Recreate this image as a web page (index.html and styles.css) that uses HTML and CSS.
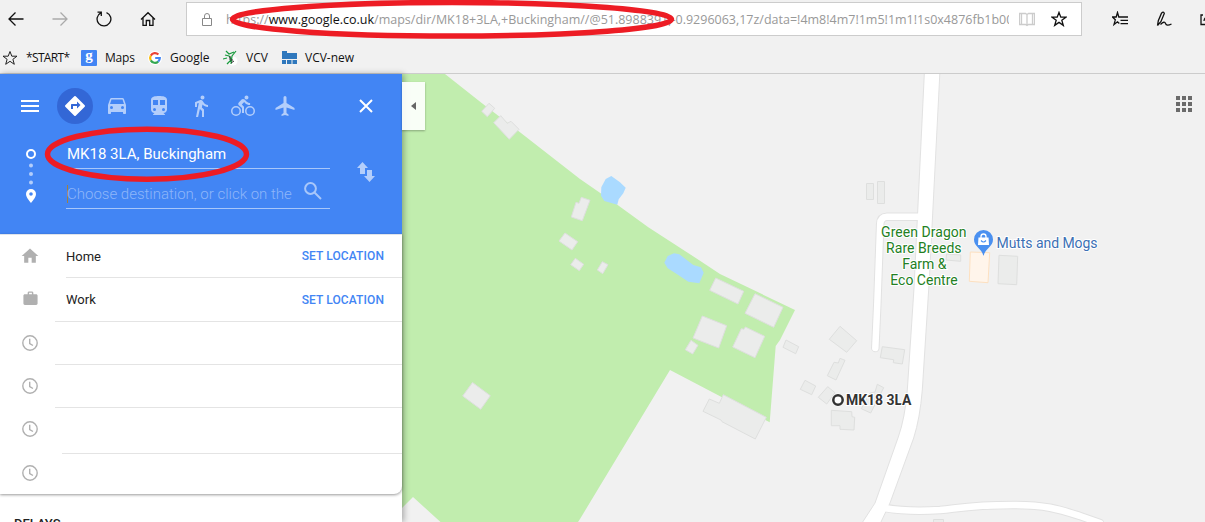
FILE: index.html
```
<!DOCTYPE html>
<html lang="en">
<head>
  <meta charset="UTF-8" />
  <title>MK18 3LA, Buckingham - Google Maps</title>
  <link rel="stylesheet" href="styles.css">
</head>
<body>

<!-- Browser toolbar -->
<header class="browser">
  <div class="toolbar">
    <nav class="nav-buttons">
      <svg width="16" height="16" viewBox="0 0 16 16"><path d="M1 8H15.500M7.500 1.500L1 8L7.500 14.500" /></svg>
      <svg class="disabled" width="16" height="16" viewBox="0 0 16 16"><path d="M0.500 8H15M8.500 1.500L15 8L8.500 14.500" /></svg>
      <svg width="16" height="16" viewBox="0 0 16 16"><path d="M10.500 1.600A6.900 6.900 0 1 1 4.800 1.900M1.500 1.200H5.300V5" /></svg>
      <svg width="16" height="16" viewBox="0 0 16 16"><path d="M1 8.500L8 1.700L15 8.500M3 7V14.400H6.300V9.500H9.700V14.400H13V7" /></svg>
    </nav>
    <div class="address">
      <svg class="lock" width="12" height="15" viewBox="0 0 12 15"><path d="M1.500 6.500H10.500V13.500H1.500ZM3.500 6.500V4A2.500 2.500 0 0 1 8.500 4V6.500" /></svg>
      <div class="url"><span class="url-scheme">https://</span><span class="url-host">www.google.co.uk</span><span class="url-path">/maps/dir/MK18+3LA,+Buckingham//@51.8988391,-0.9296063,17z/data=!4m8!4m7!1m5!1m1!1s0x4876fb1b00</span></div>
      <svg class="book" width="16" height="15" viewBox="0 0 16 15"><path d="M.5 1.500H6.500L8 2.500L9.500 1.500H15.500V12.500H9.500L8 13.500L6.500 12.500H.5ZM8 2.500V13.500M2.500 2V12M13.500 2V12" /></svg>
      <svg class="star" width="16" height="16" viewBox="0 0 16 16"><path d="M8 1.400L9.800 6.200H14.900L10.800 9.300L12.300 14.400L8 11.400L3.700 14.400L5.200 9.300L1.100 6.200H6.200Z" /></svg>
    </div>
    <div class="hub-buttons">
      <svg width="16" height="16" viewBox="0 0 16 16"><path d="M8.500 6H6.800L5.500 1.500L4.200 6H.5L3.300 8.800L2 13.500L5.500 10.800L7.300 12.500M8.500 6H16M8.500 9.300H16M8.500 12.600H16" /></svg>
      <svg width="16" height="16" viewBox="0 0 16 16"><path d="M1.500 14.500L2.300 9.800L5.500 2.200Q7.500 0 8.300 2.500L5 10.500L1.500 14.500M4.500 13.500Q8.500 9.500 9.500 12.500T15.500 13" /></svg>
      <svg width="16" height="16" viewBox="0 0 16 16"><path d="M3 4H1V13.500H13V9M4 10Q4.500 5 11 5M9 2L12 5L9 8" /></svg>
    </div>
  </div>

  <div class="bookmarks">
    <a class="bookmark start"><svg width="16" height="16" viewBox="0 0 16 16"><path fill="none" stroke="#222" d="M8 1.500L9.800 6.200H15L10.900 9.300L12.300 14.300L8 11.300L3.700 14.300L5.100 9.300L1 6.200H6.200Z" /></svg><span>*START*</span></a>
    <a class="bookmark maps"><b class="g-tile">g</b><span>Maps</span></a>
    <a class="bookmark google">
      <svg width="14" height="14" viewBox="0 0 14 14">
        <circle cx="7" cy="7" r="7" fill="#fff" />
        <g fill="none" stroke-width="2.200">
          <path stroke="#ea4335" d="M2.800 4.600A4.800 4.800 0 0 1 10.400 3.600" />
          <path stroke="#fbbc05" d="M2.800 4.600A4.800 4.800 0 0 0 2.800 9.400" />
          <path stroke="#34a853" d="M2.800 9.400A4.800 4.800 0 0 0 10.200 10.600" />
          <path stroke="#4285f4" d="M10.200 10.600Q11.800 9 11.800 7H7.200" />
        </g>
      </svg>
      <span>Google</span>
    </a>
    <a class="bookmark vcv">
      <svg width="15" height="16" viewBox="0 0 15 16"><circle cx="10" cy="11" r="4.500" fill="#fff" /><path fill="none" stroke="#179a3c" stroke-width="1.200" d="M3 1L6 4L11 2M13 1L9 6L8 14M2 5L6 6L8 9M0 9L4 8M4 14L8 10" /><path fill="none" stroke="#333" d="M7 6V10H10M8 13L11 11" /></svg>
      <span>VCV</span>
    </a>
    <a class="bookmark vcv-new">
      <svg width="15" height="14" viewBox="0 0 15 14" fill="#2f78bd"><path d="M0 0H5V2H15V8H0Z" /><path d="M0 9H4V13H0ZM5 9H9.500V13H5ZM10.500 9H15V13H10.500Z" /></svg>
      <span>VCV-new</span>
    </a>
  </div>
</header>

<main class="page">
  <!-- Directions panel -->
  <aside class="panel">
    <section class="directions">
      <div class="modes">
        <svg class="menu" width="18" height="12" viewBox="0 0 18 12"><path d="M0 0H18V2H0ZM0 5H18V7H0ZM0 10H18V12H0Z" /></svg>
        <span class="mode active"><svg width="24" height="24" viewBox="0 0 24 24"><path d="M21.700 11.300l-9-9a1 1 0 0 0-1.400 0l-9 9a1 1 0 0 0 0 1.400l9 9a1 1 0 0 0 1.400 0l9-9a1 1 0 0 0 0-1.400zM14 14.500V12h-4v3H8v-4c0-.6.4-1 1-1h5V7.500l3.500 3.500-3.500 3.500z" /></svg></span>
        <span class="mode"><svg width="24" height="24" viewBox="0 0 24 24"><path d="M18.900 5c-.2-.6-.8-1-1.400-1h-11c-.7 0-1.200.4-1.400 1L3 11v8c0 .6.400 1 1 1h1c.6 0 1-.4 1-1v-1h12v1c0 .6.400 1 1 1h1c.6 0 1-.4 1-1v-8l-2.100-6zM6.500 15a1.500 1.500 0 1 1 0-3 1.500 1.500 0 0 1 0 3zm11 0a1.500 1.500 0 1 1 0-3 1.500 1.500 0 0 1 0 3zM5 10l1.500-4.500h11L19 10H5z" /></svg></span>
        <span class="mode"><svg width="24" height="24" viewBox="0 0 24 24"><path d="M12 2c-4 0-8 .5-8 4v9.500C4 17.400 5.600 19 7.500 19L6 20.500v.5h12v-.5L16.500 19c1.900 0 3.500-1.600 3.500-3.500V6c0-3.500-4-4-8-4zM7.500 17a1.500 1.500 0 1 1 0-3 1.500 1.500 0 0 1 0 3zm3.500-6H6V6h5v5zm2 0V6h5v5h-5zm3.500 6a1.500 1.500 0 1 1 0-3 1.500 1.500 0 0 1 0 3z" /></svg></span>
        <span class="mode"><svg width="24" height="24" viewBox="0 0 24 24"><path d="M13.500 5.500a2 2 0 1 0 0-4 2 2 0 0 0 0 4zM9.800 8.900L7 23h2.100l1.800-8 2.100 2v6h2v-7.500l-2.100-2 .6-3C14.800 12 16.800 13 19 13v-2c-1.900 0-3.500-1-4.300-2.400l-1-1.600c-.4-.6-1-1-1.700-1-.3 0-.5.1-.8.1L6 8.300V13h2V9.600l1.800-.7" /></svg></span>
        <span class="mode"><svg width="24" height="24" viewBox="0 0 24 24"><path d="M15.500 5.500a2 2 0 1 0 0-4 2 2 0 0 0 0 4zM5 12a5 5 0 1 0 0 10 5 5 0 0 0 0-10zm0 8.500a3.500 3.500 0 1 1 0-7 3.500 3.500 0 0 1 0 7zm5.800-10l2.400-2.400.8.800c1.300 1.300 3 2.100 5.100 2.100V9c-1.500 0-2.700-.6-3.600-1.500l-1.900-1.900c-.5-.4-1-.6-1.600-.6s-1.100.2-1.400.6L7.800 8.400c-.4.4-.6.9-.6 1.400 0 .6.200 1.100.6 1.400L11 14v5h2v-6.200l-2.200-2.300zM19 12a5 5 0 1 0 0 10 5 5 0 0 0 0-10zm0 8.500a3.500 3.500 0 1 1 0-7 3.500 3.500 0 0 1 0 7z" /></svg></span>
        <span class="mode"><svg width="24" height="24" viewBox="0 0 24 24"><path d="M21.500 16v-2l-8-5V3.500a1.500 1.500 0 0 0-3 0V9l-8 5v2l8-2.500V19l-2 1.500V22l3.500-1 3.500 1v-1.500l-2-1.500v-5.500l8 2.500z" /></svg></span>
        <svg class="close" width="14" height="14" viewBox="0 0 14 14"><path d="M1 1L13 13M13 1L1 13" /></svg>
      </div>
      <div class="route">
        <svg class="waypoints" width="12" height="56" viewBox="0 0 12 56">
          <circle cx="6" cy="6" r="4" fill="none" stroke="#fff" stroke-width="2" />
          <g fill="#b3cefb"><circle cx="6" cy="17.500" r="2" /><circle cx="6" cy="26" r="2" /><circle cx="6" cy="34.500" r="2" /></g>
          <path fill="#fff" fill-rule="evenodd" d="M6 41A5 5 0 0 0 1 46C1 49.500 6 55 6 55S11 49.500 11 46A5 5 0 0 0 6 41ZM6 44.200A1.800 1.800 0 1 1 6 47.800A1.800 1.800 0 0 1 6 44.200Z" />
        </svg>
        <div class="fields">
          <div class="field from">MK18 3LA, Buckingham</div>
          <div class="field to">
            <span>Choose destination, or click on the</span>
            <svg width="18" height="18" viewBox="0 0 18 18"><circle cx="6.500" cy="6.500" r="5.400" /><path d="M10.500 10.500L17 17" /></svg>
          </div>
        </div>
        <svg class="swap" width="18" height="20" viewBox="0 0 18 20"><path d="M5.500 0L11 6H8V12H3V6H0ZM12.500 20L18 14H15V8H10V14H7Z" /></svg>
      </div>
    </section>

    <ul class="places">
      <li class="row home"><svg width="24" height="24" viewBox="0 0 24 24"><path d="M10 20v-6h4v6h5v-8h3L12 3 2 12h3v8z" /></svg><div class="place">Home <a>SET LOCATION</a></div></li>
      <li class="row work"><svg width="24" height="24" viewBox="0 0 24 24"><path d="M20 6h-4V4c0-1.100-.9-2-2-2h-4c-1.100 0-2 .9-2 2v2H4c-1.100 0-2 .9-2 2v11c0 1.100.9 2 2 2h16c1.100 0 2-.9 2-2V8c0-1.100-.9-2-2-2zm-6 0h-4V4h4v2z" /></svg><div class="place">Work <a>SET LOCATION</a></div></li>
      <li class="row"><svg class="clock" viewBox="0 0 16 16"><circle cx="8" cy="8" r="7.200" /><path d="M7.700 3.800V8.500L11 10.500" /></svg><div class="place"></div></li>
      <li class="row"><svg class="clock" viewBox="0 0 16 16"><circle cx="8" cy="8" r="7.200" /><path d="M7.700 3.800V8.500L11 10.500" /></svg><div class="place"></div></li>
      <li class="row tall"><svg class="clock" viewBox="0 0 16 16"><circle cx="8" cy="8" r="7.200" /><path d="M7.700 3.800V8.500L11 10.500" /></svg><div class="place"></div></li>
      <li class="row last"><svg class="clock" viewBox="0 0 16 16"><circle cx="8" cy="8" r="7.200" /><path d="M7.700 3.800V8.500L11 10.500" /></svg></li>
    </ul>
    <h2 class="delays">DELAYS</h2>
  </aside>

  <!-- Map canvas -->
  <section class="map">
    <svg class="tiles" width="803" height="448" viewBox="402 74 803 448">
      <path class="park" d="M402 74H445L481.700 103L520 132.300L580 179L617.300 204.700L648.300 227.300L700 260.700L720 274L795 310L780 340L775.700 346L769.700 422.300L670 370L580 519L578 522H440.500L413 497L402 508Z" />
      <g class="water">
        <path d="M611.300 176L605.700 179L601.300 187.300L601 195.700L604.300 201L617.300 204.700L618.700 199.300L623.300 193.300L625.700 187.700L620 182.300Z" />
        <path d="M664.300 262.700L667.700 256L674 253.300L679.300 254.300L693.300 265L701 267.300L703.700 272.700L699.300 283.300L688.300 281.700L678.300 275L667.700 268.300Z" />
      </g>
      <g class="building">
        <path d="M489 103.300L494.700 108.300L487.300 116.700L481.700 111.300Z" />
        <path d="M500.700 115.700L507.300 123.300L511 121.300L519 129.300L509.300 139.300L493.700 122.700Z" />
        <path d="M581.300 197.300L590 200.300L582.300 220.700L571.300 217L576 202.300L579 203.300Z" />
        <path d="M565 233L577.700 241.700L572 250L559 241Z" />
        <path d="M575.300 258.300L583.700 264.300L579.300 270.700L570.700 264.700Z" />
        <path d="M602.300 261.700L608 264.700L602.700 273.700L597.300 270Z" />
        <path d="M715.700 278L743.700 291.300L738 304L709.700 290.300Z" />
        <path d="M755 293.700L783 307.300L773.700 327.300L745 313.300Z" />
        <path d="M702.300 316L726.700 325.700L718.700 348L693 338Z" />
        <path d="M745.300 327L764.700 336.300L755 357.700L732.700 347L741.300 328.700L744 329.300Z" />
        <path d="M691 340.300L698 345.300L692.700 354L685.300 349.700Z" />
        <path d="M786 340L798.700 346.700L795.700 353.700L783 347.300Z" />
        <path d="M840 326.300L856.700 340.700L846.700 352.300L829.300 339.300Z" />
        <path d="M840 358.300L845 360.300L836 380L827.300 375.700L834 362.300L838.300 363Z" />
        <path d="M882.300 346.700L904.700 349.700L902.300 364L893.300 362.700L893.700 359.700L880.300 357.700Z" />
        <path d="M805 380.300L815.700 386L811.700 394.700L800.300 389.300Z" />
        <path d="M827.700 386.700L835 392.700L826.700 404L818.300 397.300Z" />
        <path d="M877.300 384.300L883.700 387.700L870.700 413L861.300 408.700L870 393L875 392Z" />
        <path d="M831.300 410.300L851.700 411.700L852 416.700L854.700 417.300L854 430L840 429.300V425.700H831.300Z" />
        <path d="M723.300 394.700L766.300 417.300L755.300 439L722 421.700L721 420L703 411.300L709.300 399L719.300 403.300Z" />
        <path d="M472.500 382.500L490.300 395.700L480.700 409.300L462.700 396Z" />
        <path d="M866.500 183.500H873.500V199.500H866.500ZM877.500 181.500H884.500V203.500H877.500Z" />
        <path d="M999 255.300L1017.700 256.300L1016.700 284.700L998 283.700Z" />
        <path d="M946.500 254L960.700 255V261.300L946 260Z" />
        <path d="M933.500 519.500H943.500V524H933.500Z" />
      </g>
      <path class="shop" d="M970.300 252L989.700 252.700L988 282.700L969.300 281.300Z" />
      <g class="casing">
        <path d="M920 216.700H887Q880.500 217 880.200 224L877.300 304L875.300 348" />
        <path d="M886 508Q908 512 940 510C967 507 975 505 1013 505C1046 505 1058 509 1080 516L1100 523" />
      </g>
      <path class="main-road" d="M924.500 70L914 288L907.300 390Q905 418 898.300 437L875 503L862 523H880.500L890 503L913.700 438Q920 418 922.300 390L929.300 280L940 70Z" />
      <g class="lane">
        <path d="M922 216.700H887Q880.500 217 880.200 224L877.300 304L875.300 348" />
        <path d="M884 508Q908 512 940 510C967 507 975 505 1013 505C1046 505 1058 509 1080 516L1100 523" />
      </g>
      <g class="label green">
        <text x="923.800" y="237.300" textLength="85.500">Green Dragon</text>
        <text x="923.800" y="253.300" textLength="75.500">Rare Breeds</text>
        <text x="924.300" y="269.300">Farm &amp;</text>
        <text x="924" y="285.300" textLength="67.500">Eco Centre</text>
      </g>
      <path fill="#4a90f0" d="M983.500 230A9.600 9.600 0 0 0 974 239.600C974 247 981.500 248 983.500 256C985.500 248 993 247 993 239.600A9.600 9.600 0 0 0 983.500 230Z" />
      <path fill="#fff" d="M978.500 237.500H988.500L989 245H978Z" />
      <path fill="none" stroke="#fff" stroke-width="1.300" d="M981 238V236.500A2.500 2.500 0 0 1 986 236.500V238" />
      <path fill="none" stroke="#4a90f0" stroke-width="1.200" d="M981 240.500Q983.500 243.500 986 240.500" />
      <text class="label blue" x="996.500" y="248.300" textLength="101">Mutts and Mogs</text>
      <circle cx="838" cy="400" r="6.500" fill="#fff" />
      <circle cx="838" cy="400" r="4.700" fill="#fff" stroke="#333" stroke-width="2.500" />
      <text class="label place-name" x="846" y="405" textLength="65.500">MK18 3LA</text>
      <path fill="#6b6b6b" d="M1176 96h4v4h-4zM1182 96h4v4h-4zM1188 96h4v4h-4zM1176 102h4v4h-4zM1182 102h4v4h-4zM1188 102h4v4h-4zM1176 108h4v4h-4zM1182 108h4v4h-4zM1188 108h4v4h-4z" />
    </svg>
    <button class="collapse"></button>
  </section>
</main>

<!-- Hand-drawn rings over the address and the start point -->
<svg class="rings" width="1205" height="522" viewBox="0 0 1205 522">
  <ellipse cx="452" cy="19.300" rx="219.500" ry="16.800" />
  <ellipse cx="147" cy="154.200" rx="99.500" ry="25" />
</svg>

</body>
</html>
```
FILE: styles.css
```
* {
  box-sizing: border-box;
}
body {
  margin: 0;
  width: 1205px;
  height: 522px;
  overflow: hidden;
  background: #fff;
  font-family: Roboto, sans-serif;
}
svg {
  display: block;
  flex: none;
}

/* browser */
.browser {
  height: 74px;
  overflow: hidden;
  background: #f1f1f1;
  border-bottom: 1px solid #ccc;
  font-family: "Open Sans", "Noto Sans", sans-serif;
}
.toolbar {
  display: flex;
  height: 38px;
  padding-top: 2px;
}
.nav-buttons {
  display: flex;
  flex: none;
  gap: 28px;
  width: 186px;
  padding: 9px 0 0 8px;
}
.nav-buttons svg,
.hub-buttons svg,
.address svg {
  fill: none;
  stroke: #111;
  stroke-width: 1.3;
}
.nav-buttons .disabled {
  stroke: #aaa;
}
.address {
  display: flex;
  flex: none;
  align-items: center;
  width: 896px;
  height: 34px;
  padding-left: 14px;
  background: #fff;
  border: 1px solid #ccc;
}
.address .lock {
  stroke: #888;
  stroke-width: 1;
}
.url {
  width: 783px;
  margin-left: 13px;
  overflow: hidden;
  white-space: nowrap;
  font-size: 12.5px;
  color: #999;
}
.url-host {
  color: #111;
}
.address .book {
  margin-left: 10px;
  stroke: #ccc;
}
.address .star {
  margin-left: 16px;
}
.hub-buttons {
  display: flex;
  gap: 28px;
  padding: 9px 0 0 30px;
}
.bookmarks {
  display: flex;
  height: 35px;
  padding: 4px 0 0 2px;
  align-items: center;
  font-size: 12px;
  color: #111;
}
.bookmark {
  display: flex;
  align-items: center;
  gap: 8px;
  white-space: nowrap;
}
.bookmark.start {
  width: 79px;
  letter-spacing: -0.65px;
}
.bookmark.maps {
  width: 67px;
  letter-spacing: -0.2px;
}
.bookmark.google {
  width: 75px;
}
.bookmark.vcv {
  width: 59px;
}
.g-tile {
  width: 16px;
  height: 16px;
  border-radius: 1px;
  background: #4285f4;
  color: #fff;
  font: bold 15px/11px "Liberation Serif", serif;
  text-align: center;
}

/* panel */
.page {
  display: flex;
  height: 448px;
}
.panel {
  position: relative;
  z-index: 1;
  width: 402px;
  flex: none;
  background: #fff;
  box-shadow: 2px 0 6px rgba(0, 0, 0, 0.3);
}
.directions {
  height: 160px;
  padding-top: 14px;
  background: #4285f4;
}
.modes {
  display: flex;
  align-items: center;
  height: 36px;
  padding-left: 21px;
  fill: #fff;
}
.mode {
  display: flex;
  align-items: center;
  justify-content: center;
  width: 36px;
  height: 36px;
  margin-right: 6px;
  fill: #b3cefb;
}
.mode.active {
  margin-left: 18px;
  border-radius: 50%;
  background: #3367d6;
  fill: #fff;
}
.close {
  margin-left: 50px;
  stroke: #fff;
  stroke-width: 2;
}
.route {
  display: flex;
  padding: 24px 0 0 25px;
}
.fields {
  width: 264px;
  margin: -10px 0 0 29px;
}
.field {
  display: flex;
  justify-content: space-between;
  height: 31px;
  border-bottom: 1px solid #a8c7fa;
  color: #fff;
  font-size: 15px;
  line-height: 32px;
  padding-left: 1px;
}
.field.to {
  height: 40px;
  padding-top: 10px;
  color: #8eb6f9;
  font-weight: 300;
}
/* text caret */
.field.to::before {
  content: "";
  width: 1px;
  height: 18px;
  margin: 6px -1px 0 0;
  background: #a08040;
}
.field.to span {
  flex: 1;
  white-space: nowrap;
  line-height: 30px;
}
.field.to svg {
  margin: 3px 8px 0 0;
  fill: none;
  stroke: #a8c7fa;
  stroke-width: 2;
}
.swap {
  margin: 14px 0 0 27px;
  fill: #b3cefb;
}
.places {
  height: 260px;
  margin: 0;
  padding: 0;
  list-style: none;
  border-top: 1px solid #e0e4ea;
  border-radius: 0 0 8px 0;
  box-shadow: 0 1px 3px rgba(0, 0, 0, 0.4);
}
.row {
  display: flex;
  height: 43px;
  padding-left: 20px;
}
.row svg {
  width: 20px;
  height: 20px;
  margin: 11px 15px 0 0;
  fill: #b0b0b0;
}
.place {
  display: flex;
  justify-content: space-between;
  flex: 1;
  padding-right: 18px;
  border-bottom: 1px solid #e4e4e4;
  color: #222;
  font-size: 13px;
  line-height: 43px;
}
.place a {
  color: #4285f4;
  font-size: 12px;
  font-weight: 500;
  letter-spacing: 0.1px;
}
.home .place {
  margin-left: 11px;
}
.work {
  height: 44px;
}
.row.work svg {
  width: 17px;
  height: 17px;
  margin: 12px 16px 0 2px;
}
.work .place {
  padding-left: 11px;
  line-height: 44px;
}
.row .clock {
  width: 16px;
  height: 16px;
  margin: 13px 17px 0 2px;
  fill: none;
  stroke: #b0b0b0;
  stroke-width: 1.4;
}
.tall {
  height: 46px;
}
.tall .place {
  margin-left: 7px;
}
.row.last .clock {
  margin-top: 11px;
}
.delays {
  margin: 22px 0 0 14px;
  font-size: 13px;
  font-weight: 500;
  line-height: 16px;
  color: #222;
}

/* map */
.map {
  position: relative;
  flex: 1;
  background: #f1f1f1;
}
.park {
  fill: #c1edae;
}
.water {
  fill: #aadaff;
}
.building {
  fill: #ebeceb;
  stroke: #dedfde;
}
.shop {
  fill: #fff5eb;
  stroke: #fde0c0;
}
.casing {
  fill: none;
  stroke: #e2e2e2;
  stroke-width: 8.5;
  stroke-linecap: round;
}
.lane {
  fill: none;
  stroke: #fff;
  stroke-width: 6.5;
  stroke-linecap: round;
}
.main-road {
  fill: #fff;
  stroke: #e2e2e2;
}
.label {
  font-size: 14px;
  paint-order: stroke;
  stroke: #fff;
  stroke-width: 2px;
}
.green {
  fill: #238023;
  text-anchor: middle;
}
.blue {
  fill: #3c70b4;
}
.place-name {
  fill: #333;
  font-weight: 700;
}
.collapse {
  position: absolute;
  left: 0;
  top: 8px;
  z-index: 2;
  width: 23px;
  height: 48px;
  padding: 0 0 0 9px;
  border: 0;
  background: rgba(255, 255, 255, 0.9);
  box-shadow: 0 1px 2px rgba(0, 0, 0, 0.3);
}
.collapse::before {
  content: "";
  display: block;
  width: 0;
  border: solid transparent;
  border-width: 4px 5px 4px 0;
  border-right-color: #666;
}

/* annotations */
.rings {
  position: absolute;
  left: 0;
  top: 0;
  z-index: 3;
  fill: none;
  stroke: #ed1c24;
  stroke-width: 5.5;
}
```
